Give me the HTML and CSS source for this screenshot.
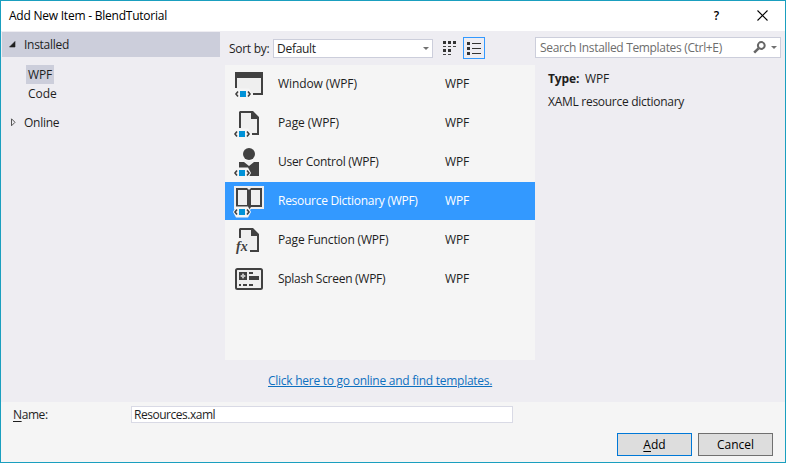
FILE: index.html
```html
<!DOCTYPE html>
<html lang="en">
<head>
<meta charset="utf-8">
<title>Add New Item - BlendTutorial</title>
<link rel="stylesheet" href="styles.css">
</head>
<body>
<svg width="0" height="0" class="defs">
  <defs>
    <g id="badge">
      <path class="halo" d="M2.500 0h12l3 5.500-3 5.500h-12l-3-5.500z"/>
      <path class="line" d="M3.500 3 1.500 5.500l2 2.500M13.500 3l2 2.500-2 2.500"/>
      <path class="blue" d="M5.500 2.500h6v6h-6z"/>
    </g>
  </defs>
</svg>
<div class="window">
  <header class="titlebar">
    <span class="t-title">Add New Item - BlendTutorial</span>
    <span class="help">?</span>
    <svg class="close" width="11" height="11" viewBox="0 0 11 11"><path d="M.5.5l10 10M10.500.5l-10 10"/></svg>
  </header>
  <main class="content">
    <nav class="tree">
      <div class="node open"><svg width="7" height="7" viewBox="0 0 7 7"><path d="M6 .5V6H.5z" fill="#1e1e1e" stroke="#1e1e1e" stroke-width=".6"/></svg><span class="t-installed">Installed</span></div>
      <div class="leaf selected"><span class="t-wpf">WPF</span></div>
      <div class="leaf"><span>Code</span></div>
      <div class="node closed"><svg width="7" height="9" viewBox="0 0 7 9"><path d="M1.500.8v7L5 4.300z" fill="none" stroke="#555"/></svg><span class="t-online">Online</span></div>
    </nav>
    <section class="center">
      <div class="toolbar">
        <span class="t-sort">Sort by:</span>
        <div class="combo"><span class="t-default">Default</span><svg width="6" height="3" viewBox="0 0 6 3"><path d="M0 0h6L3 3z" fill="#717171"/></svg></div>
        <svg class="grid-icon" width="14" height="15" viewBox="0 0 14 15" fill="#333"><path d="M0 0h3v3H0zM5 0h3v3H5zM10 0h3v3h-3zM0 8h3v3H0zM5 8h3v3H5z"/><path d="M0 5.500h3M5 5.500h3M10 5.500h3M0 13.500h3M5 13.500h3" stroke="#444" stroke-width="1"/></svg>
        <div class="list-button"><svg width="15" height="13" viewBox="0 0 15 13"><path d="M0 0h3v3H0zM0 5h3v3H0zM0 10h3v3H0z" fill="#333"/><path d="M5 1.500h9M5 6.500h9M5 11.500h9" stroke="#333"/></svg></div>
      </div>
      <div class="list">
        <div class="row">
          <svg width="38" height="38" viewBox="0 0 38 38"><path class="paper" d="M6 13h26v16H6z"/><path class="solid" d="M5 7h28v23H23v-2h8V13H7v10H5z"/><use href="#badge" x="4.500" y="23.500"/></svg>
          <span class="name n1">Window (WPF)</span><span class="t-wpf">WPF</span>
        </div>
        <div class="row">
          <svg width="38" height="38" viewBox="0 0 38 38"><path class="paper" d="M10 8h12l6 6v16H10z"/><path class="solid" fill-rule="evenodd" d="M10 7h13l6 6v18h-7v-2h5V15h-6V9H11v15H9V8z"/><use href="#badge" x="3.500" y="24.500"/></svg>
          <span class="name n1">Page (WPF)</span><span class="t-wpf">WPF</span>
        </div>
        <div class="row">
          <svg width="38" height="38" viewBox="0 0 38 38"><circle class="solid" cx="19" cy="11" r="6"/><path class="solid" d="M9 19h5l5 4 5-4h5v14H9z"/><path class="paper" d="M15 18h8l-4 4z"/><use href="#badge" x="3.500" y="24.500"/></svg>
          <span class="name">User Control (WPF)</span><span class="t-wpf">WPF</span>
        </div>
        <div class="row selected">
          <svg width="38" height="38" viewBox="0 0 38 38"><path class="paper" d="M4 4h30v23H21l-2 2-3-2H4z"/><path class="solid" fill-rule="evenodd" d="M6 6h11l2 2 2-2h11v19H21l-2 3-2-3H6zM8 8v15h9V8zM21 8v15h9V8z"/><use href="#badge" x="3.500" y="24.500"/></svg>
          <span class="name">Resource Dictionary (WPF)</span><span class="t-wpf">WPF</span>
        </div>
        <div class="row">
          <svg width="38" height="38" viewBox="0 0 38 38"><path class="paper" d="M10 8h12l6 6v16H10z"/><path class="solid" d="M10 7h13l6 6v18h-9v-2h7V15h-6V9H11v8H9V8z"/><text class="fx" x="6" y="30">fx</text></svg>
          <span class="name n5">Page Function (WPF)</span><span class="t-wpf">WPF</span>
        </div>
        <div class="row">
          <svg width="38" height="38" viewBox="0 0 38 38"><rect class="frame" x="6" y="9" width="26" height="20" rx="1.500"/><path class="solid" d="M9 12h8v8H9zM19 12h4v2h-4zM19 16h10v4H19zM9 24h2v2H9zM13 24h4v2h-4zM19 24h4v2h-4z"/><path d="M13 13l1 2 2 1-2 1-1 2-1-2-2-1 2-1z" fill="#eee"/><path class="solid" d="M12.500 15.500h1v1h-1z"/></svg>
          <span class="name">Splash Screen (WPF)</span><span class="t-wpf">WPF</span>
        </div>
      </div>
      <div class="online"><a class="t-link">Click here to go online and find templates.</a></div>
    </section>
    <aside class="details">
      <div class="search"><span class="t-search">Search Installed Templates (Ctrl+E)</span>
        <svg class="lens" width="13" height="13" viewBox="0 0 13 13"><circle cx="8.300" cy="4.500" r="3.400" fill="none" stroke="#666" stroke-width="2"/><path d="M5.500 7.300 1.200 11.600" stroke="#666" stroke-width="2.600"/></svg>
        <svg width="6" height="3" viewBox="0 0 6 3"><path d="M0 0h6L3 3z" fill="#717171"/></svg></div>
      <div class="type"><b class="t-type">Type:</b><span class="t-wpf">WPF</span></div>
      <div class="desc"><span class="t-desc">XAML resource dictionary</span></div>
    </aside>
  </main>
  <footer class="footer">
    <div class="field"><label><span class="t-name"><u>N</u>ame:</span></label><div class="input"><span class="t-res">Resources.xaml</span></div></div>
    <div class="buttons"><button class="primary"><span class="t-add"><u>A</u>dd</span></button><button><span class="t-cancel">Cancel</span></button></div>
  </footer>
</div>
</body>
</html>
```
FILE: styles.css
```css
* { box-sizing: border-box; }
body { margin: 0; font: 12px/16px "Open Sans", "Noto Sans", sans-serif; color: #1e1e1e; letter-spacing: -.28px; }
span, a, b { white-space: nowrap; }
svg { flex: none; display: block; }
.defs { display: none; }
.window { width: 786px; height: 463px; border: 1px solid #1a9fbf; display: flex; flex-direction: column; background: #eeedf2; }
.titlebar { height: 30px; background: #fff; display: flex; align-items: center; padding: 1px 17px 1px 8px; color: #000; }
.t-title { letter-spacing: -.23px; }
.help { margin-left: auto; margin-right: 38px; font-weight: 600; }
.close { stroke: #000; stroke-width: 1.1; fill: none; margin-bottom: 2px; }
.content { height: 371px; display: flex; }
.tree { width: 224px; padding: 1px 5px 0 1px; }
.node { display: flex; align-items: center; height: 25px; }
.open { background: #cccedb; padding-left: 7px; gap: 8px; margin-bottom: 8px; }
.open span { padding-top: 1px; }
.closed { padding-left: 8px; gap: 7px; margin-top: 7px; }
.leaf { width: 28px; height: 19px; margin-left: 24px; padding: 2px 2px 0; letter-spacing: 0; }
.t-wpf { letter-spacing: -.1px; }
.leaf.selected { background: #cccedb; }
.center { width: 310px; }
.toolbar { height: 34px; padding: 6px 0 0 4px; display: flex; align-items: flex-start; }
.toolbar .t-sort { width: 44px; padding-top: 4px; }
.combo { width: 160px; height: 19px; margin-top: 2px; border: 1px solid #cccedb; background: #fff; display: flex; align-items: center; justify-content: space-between; padding: 0 3px 0 3px; }
.grid-icon { margin: 4px 6px 0 10px; }
.list-button { width: 22px; height: 22px; border: 1px solid #39f; padding: 4px 3px; }
.list { height: 295px; background: #f5f5f5; }
.row { height: 38px; margin-bottom: 1px; display: flex; align-items: center; padding-left: 5px; }
.row svg { margin-right: 10px; align-self: flex-start; }
.row .name { width: 167px; }
.row .n1 { letter-spacing: -.1px; }
.row .n5 { letter-spacing: -.17px; }
.row.selected { background: #39f; color: #fff; }
.solid { fill: #414141; }
.paper { fill: #efefef; }
.halo { fill: #f5f5f5; }
.line { fill: none; stroke: #414141; stroke-width: 1.6; }
.blue { fill: #0092d8; }
.frame { fill: #efefef; stroke: #414141; stroke-width: 2; }
.fx { font: italic bold 14px "Liberation Serif", serif; letter-spacing: 0; fill: #414141; stroke: #f5f5f5; stroke-width: 2px; paint-order: stroke; }
.online { padding: 13px 0 0 43px; color: #0e70c0; letter-spacing: -.26px; }
.online a { text-decoration: underline; }
.details { width: 250px; }
.search { width: 246px; height: 21px; margin-top: 6px; border: 1px solid #cccedb; background: #fff; color: #6d6d6d; display: flex; align-items: center; padding: 0 3px 0 4px; letter-spacing: -.33px; }
.lens { margin: 0 5px 0 auto; }
.type { display: flex; padding: 13px 0 0 13px; }
.type b { width: 37px; letter-spacing: -.1px; }
.desc { padding: 7px 0 0 13px; }
.footer { height: 60px; background: #f5f5f5; }
.field { display: flex; padding: 4px 0 0 12px; height: 31px; }
.field label { width: 118px; padding-top: 1px; letter-spacing: -.4px; }
.input { width: 382px; height: 17px; border: 1px solid #d9dae5; background: #fff; padding-left: 2px; line-height: 16px; letter-spacing: -.48px; }
.buttons { display: flex; justify-content: flex-end; gap: 6px; padding-right: 12px; }
button { width: 75px; height: 23px; padding: 0; border: 1px solid #707070; background: #ddd; font: inherit; letter-spacing: 0; color: #000; }
button.primary { border-color: #0078d7; }
u { text-underline-offset: 2px; }
```
